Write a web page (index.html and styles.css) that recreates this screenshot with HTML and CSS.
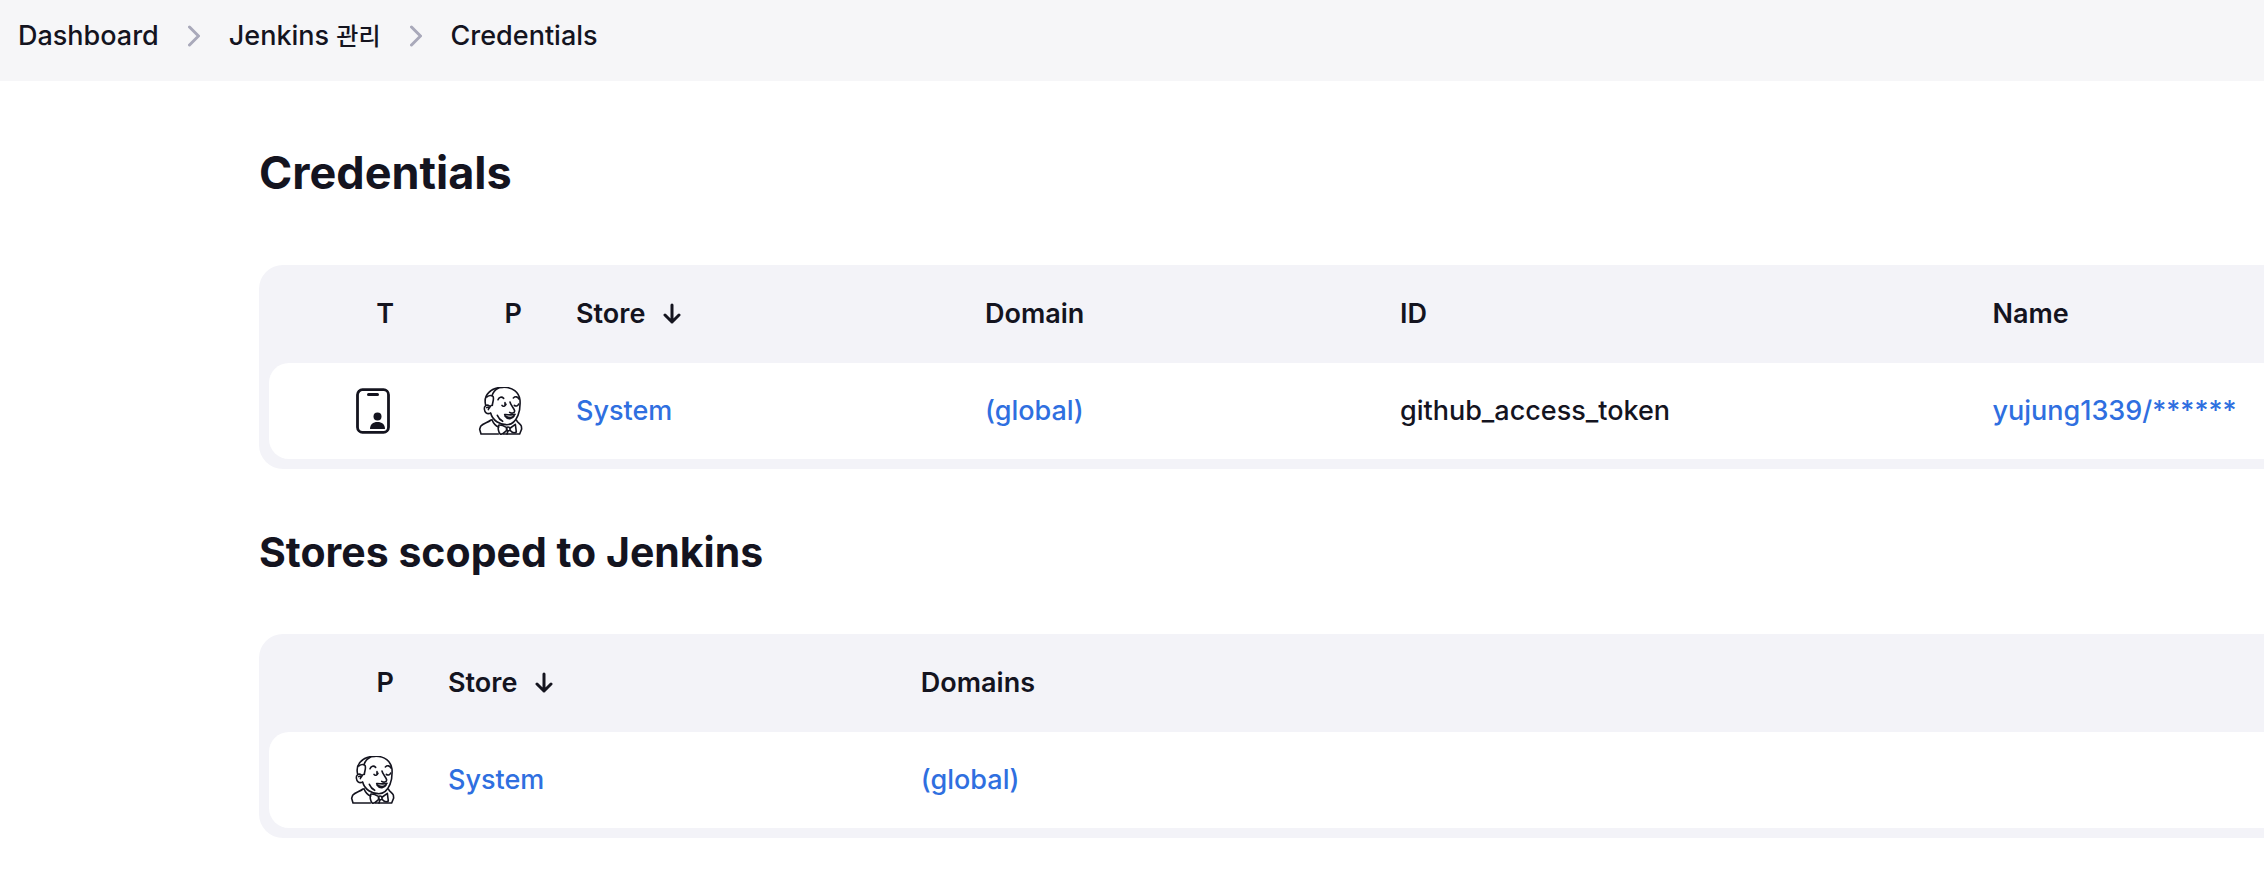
FILE: index.html
```html
<!DOCTYPE html>
<html lang="ko">
<head>
<meta charset="utf-8">
<title>Credentials</title>
<link rel="stylesheet" href="styles.css">
</head>
<body>
<svg class="symbols" aria-hidden="true">
  <symbol id="chevron" viewBox="0 0 12 22"><path d="M1.500 2l9 9-9 9" fill="none" stroke="currentColor" stroke-width="3" stroke-linecap="round" stroke-linejoin="round"/></symbol>
  <symbol id="arrow" viewBox="0 0 18 22"><path d="M9 2v17M2 12l7 7 7-7" fill="none" stroke="currentColor" stroke-width="3" stroke-linecap="round" stroke-linejoin="round"/></symbol>
  <symbol id="badge" viewBox="0 0 48 48">
    <rect x="9.500" y="2.700" width="31" height="42.600" rx="5" fill="none" stroke="currentColor" stroke-width="2.800"/>
    <path d="M20.500 7.500h9" stroke="currentColor" stroke-width="3" stroke-linecap="round"/>
    <circle cx="29.500" cy="29.500" r="4" fill="currentColor"/>
    <path d="M22 42c0-4.500 3-7 7.500-7s7.500 2.500 7.500 7z" fill="currentColor"/>
  </symbol>
  <symbol id="butler" viewBox="20 39 144 144">
    <g fill="none" stroke="currentColor" stroke-width="4.800" stroke-linecap="round" stroke-linejoin="round">
      <path d="M49 94C45 78 48 66 58 56C70 43 86 40 101 40C130 39 149 55 152 78C153 94 152 110 146 124C138 143 126 153 110 152C92 151 70 141 64 117"/>
      <path d="M88 42C75 48 70 58 68 66M52 69C59 64 67 64 71 67C75 74 70 83 69 94C64 93 63 98 60 102"/>
      <path d="M60 96C52 90 44 96 45 105C46 115 52 121 63 118M52 101C57 98 60 102 57 107"/>
      <path d="M86 77C89 69 97 67 103 73M132 72C138 66 145 68 149 75"/>
      <path d="M98 94C101 99 108 97 110 91M107 86V94M135 94C139 98 146 96 148 90"/>
      <path d="M122 84C124 94 134 102 136 111C136 118 127 119 121 115"/>
      <path d="M106 122C115 121 124 125 137 121M107 126C115 138 130 135 135 125M112 128C119 131 126 131 131 128"/>
      <path d="M84 124C88 133 94 139 100 142"/>
      <path d="M65 138C53 147 42 147 34 157L31 166L35 180H87M68 137C73 150 80 156 88 159M142 139C143 145 153 149 156 156L157 165L151 180H102"/>
      <path d="M89 153C84 162 88 175 93 181C101 181 106 174 112 169L111 160C104 156 97 152 89 153M113 160C118 157 123 161 122 168C117 173 111 171 113 160M123 162L138 151L141 174C133 179 126 174 122 169M115 173L113 180"/>
    </g>
  </symbol>
</svg>
<nav class="breadcrumbs" aria-label="Breadcrumbs">
  <a href="#">Dashboard</a>
  <svg class="chevron" aria-hidden="true"><use href="#chevron"/></svg>
  <a href="#">Jenkins <span class="hangul">관리</span></a>
  <svg class="chevron" aria-hidden="true"><use href="#chevron"/></svg>
  <a href="#">Credentials</a>
</nav>
<main class="content">
  <h1>Credentials</h1>
  <div class="panel">
    <table class="credentials">
      <colgroup><col class="col-first"><col class="col-icon"><col class="col-store"><col class="col-domain"><col class="col-id"><col></colgroup>
      <thead><tr>
        <th class="icon-cell" scope="col">T</th><th class="icon-cell" scope="col">P</th>
        <th scope="col">Store<svg class="arrow" aria-hidden="true"><use href="#arrow"/></svg></th>
        <th scope="col">Domain</th><th scope="col">ID</th><th scope="col">Name</th>
      </tr></thead>
      <tbody><tr>
        <td class="icon-cell"><svg class="icon" role="img" aria-label="Username with password"><use href="#badge"/></svg></td>
        <td class="icon-cell"><svg class="icon" role="img" aria-label="Jenkins"><use href="#butler"/></svg></td>
        <td><a href="#">System</a></td><td><a href="#">(global)</a></td>
        <td>github_access_token</td><td><a href="#">yujung1339/******</a></td>
      </tr></tbody>
    </table>
  </div>
  <h2>Stores scoped to Jenkins</h2>
  <div class="panel">
    <table>
      <colgroup><col class="col-first"><col class="col-scope"><col></colgroup>
      <thead><tr>
        <th class="icon-cell" scope="col">P</th>
        <th scope="col">Store<svg class="arrow" aria-hidden="true"><use href="#arrow"/></svg></th>
        <th scope="col">Domains</th>
      </tr></thead>
      <tbody><tr>
        <td class="icon-cell"><svg class="icon" role="img" aria-label="Jenkins"><use href="#butler"/></svg></td>
        <td><a href="#">System</a></td><td><a href="#">(global)</a></td>
      </tr></tbody>
    </table>
  </div>
</main>
</body>
</html>
```
FILE: styles.css
```css
* { box-sizing: border-box; }
body {
  margin: 0;
  background: #fff;
  color: #14141f;
  font-family: Inter, "Noto Sans CJK KR", sans-serif;
  font-size: 27px;
  font-weight: 500;
  line-height: 40px;
}
a { color: #2f6fe0; text-decoration: none; }
.symbols { display: none; }
.breadcrumbs {
  display: flex;
  align-items: center;
  gap: 29px;
  padding: 16px 18px 25px;
  background: #f6f6f8;
}
.breadcrumbs a { color: inherit; }
.hangul { font-size: 24px; line-height: 1; }
.chevron { width: 12px; height: 22px; color: #a9a9ba; }
.content { padding: 60px 0 32px 259px; }
h1, h2 { margin: 0; font-weight: 700; line-height: 64px; }
h1 { margin-bottom: 60px; font-size: 45px; }
h2 { margin: 51px 0 50px; font-size: 41px; }
.panel {
  padding: 0 0 10px 10px;
  border-radius: 24px 0 0 24px;
  background: #f3f3f8;
}
table { width: 100%; table-layout: fixed; border-spacing: 0; }
th, td { padding: 0 0 0 26px; text-align: left; white-space: nowrap; }
th { height: 98px; font-weight: 600; }
td { height: 96px; background: #fff; }
td:first-child { border-radius: 20px 0 0 20px; }
.icon-cell { padding: 0 26px 0 0; text-align: right; }
th.icon-cell { padding-right: 28px; }
.col-first { width: 153px; }
.col-icon { width: 128px; }
.col-store { width: 20.5%; }
.col-domain { width: 20.8%; }
.col-id { width: 29.7%; }
.col-scope { width: 23.7%; }
.icon { display: inline-block; width: 48px; height: 48px; vertical-align: middle; overflow: visible; }
.arrow { width: 18px; height: 22px; margin-left: 18px; vertical-align: -2px; }
```
